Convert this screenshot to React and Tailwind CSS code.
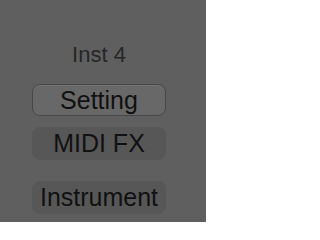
export default function App() {
  return (
    <div className="w-[206px] h-[222px] bg-[#5f5f5f] font-['Liberation_Sans',Arial,sans-serif] overflow-hidden">
      <div className="flex flex-col pl-[32px] pt-[42px]">
        <div className="w-[134px] h-[26px] flex items-center justify-center text-[22px] text-[#272727] leading-none">
          Inst 4
        </div>
        <button className="mt-[16px] w-[134px] h-[32px] rounded-[8px] bg-[#686868] border border-[#474747] shadow-[inset_0_1px_0_rgba(255,255,255,0.08)] text-[25px] text-[#111] leading-none flex items-center justify-center">
          Setting
        </button>
        <button className="mt-[11px] w-[134px] h-[33px] rounded-[8px] bg-[#575757] text-[25px] text-[#111] leading-none flex items-center justify-center">
          MIDI FX
        </button>
        <button className="mt-[21px] w-[134px] h-[33px] rounded-[8px] bg-[#575757] text-[25px] text-[#111] leading-none flex items-center justify-center">
          Instrument
        </button>
      </div>
    </div>
  );
}
